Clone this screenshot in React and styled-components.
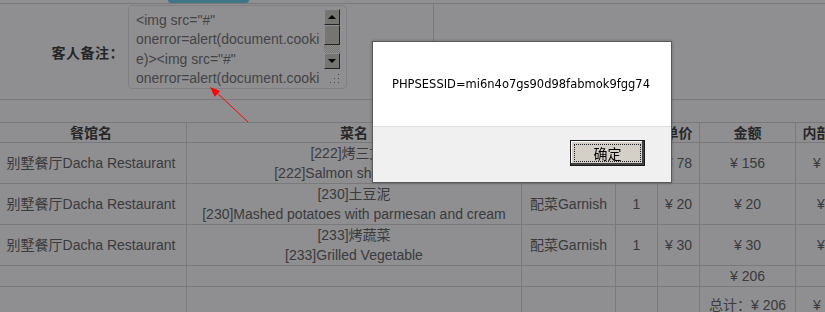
import React from 'react'
import styled, { createGlobalStyle } from 'styled-components'

const GlobalStyle = createGlobalStyle`
  html, body {
    margin: 0;
    padding: 0;
    background: #fff;
    overflow: hidden;
  }
  body {
    font-family: "Liberation Sans", "Noto Sans CJK SC", sans-serif;
    font-size: 14px;
    color: #6a6a6a;
  }
`

const items = [
  { shop: '别墅餐厅Dacha Restaurant', cn: '[222]烤三文鱼', en: '[222]Salmon shashlik rice', kind: '主菜Main', qty: 2, price: 78, total: 156 },
  { shop: '别墅餐厅Dacha Restaurant', cn: '[230]土豆泥', en: '[230]Mashed potatoes with parmesan and cream', kind: '配菜Garnish', qty: 1, price: 20, total: 20 },
  { shop: '别墅餐厅Dacha Restaurant', cn: '[233]烤蔬菜', en: '[233]Grilled Vegetable', kind: '配菜Garnish', qty: 1, price: 30, total: 30 }
]

const noteLines = [
  '<img src="#"',
  'onerror=alert(document.cooki',
  'e)><img src="#"',
  'onerror=alert(document.cooki'
]

const Page = styled.div`
  width: 825px;
`

const TopTab = styled.div`
  width: 81px;
  height: 3px;
  margin-left: 168px;
  background: #72cfee;
  border-radius: 0 0 3px 3px;
`

const FormTable = styled.table`
  width: 100%;
  border-collapse: collapse;
  border-top: 1px solid #dadada;
  border-bottom: 1px solid #dadada;
`

const LabelCell = styled.td`
  width: 124px;
  height: 96px;
  padding: 0;
  box-sizing: border-box;
  text-align: right;
  vertical-align: middle;
  font-weight: bold;
  font-size: 14px;
  letter-spacing: 0.5px;
  color: #444;
  font-family: "Noto Sans CJK SC", sans-serif;
`

const FieldCell = styled.td`
  width: 309px;
  padding: 1px 0 0 4px;
  box-sizing: border-box;
  vertical-align: top;
  border-right: 1px solid #dadada;
`

const NoteBox = styled.div`
  display: flex;
  width: 219px;
  height: 84px;
  box-sizing: border-box;
  border: 1px solid #e4e4e4;
  border-radius: 4px;
  padding: 3px 6px 0 7px;
  overflow: hidden;
`

const NoteText = styled.div`
  flex: 1;
  overflow: hidden;
  padding-top: 2px;
  font-size: 14px;
  line-height: 19.4px;
  color: #7a7a7a;
  white-space: pre;
`

const ScrollBar = styled.div`
  display: flex;
  flex-direction: column;
  width: 16px;
  flex: none;
`

const ScrollBtn = styled.div`
  height: 16px;
  box-sizing: border-box;
  background: #d4d0c8;
  border: 1px solid;
  border-color: #fff #404040 #404040 #fff;
  display: flex;
  align-items: center;
  justify-content: center;
  &::before {
    content: '';
    border-left: 4px solid transparent;
    border-right: 4px solid transparent;
    ${p => (p.$dir === 'up' ? 'border-bottom: 4px solid #000;' : 'border-top: 4px solid #000;')}
  }
`

const Thumb = styled.div`
  height: 20px;
  box-sizing: border-box;
  background: #d4d0c8;
  border: 1px solid;
  border-color: #fff #404040 #404040 #fff;
`

const Track = styled.div`
  height: 8px;
  background: repeating-conic-gradient(#fff 0 25%, #d4d0c8 0 50%) 0 0 / 2px 2px;
`

const Grip = styled.svg`
  margin-top: 4px;
  align-self: flex-end;
`

const RestCell = styled.td``

const OrderTable = styled.table`
  margin: 22px 0 0 -5px;
  width: 870px;
  table-layout: fixed;
  border-collapse: collapse;
  text-align: center;
  & td, & th {
    border: 1px solid #dadada;
    padding: 0;
    line-height: 20px;
    vertical-align: middle;
    white-space: nowrap;
    overflow: hidden;
  }
`

const HeadCell = styled.th`
  line-height: 19px !important;
  font-weight: bold;
  color: #474747;
  font-family: "Noto Sans CJK SC", sans-serif;
  font-size: 14px;
`

const SumRow = styled.tr`
  height: ${p => p.$h}px;
`

const Backdrop = styled.div`
  position: fixed;
  inset: 0;
  background: rgba(0, 1, 4, 0.44);
`

const AlertBox = styled.div`
  position: absolute;
  left: 372px;
  top: 41px;
  width: 300px;
  height: 142px;
  box-sizing: border-box;
  border: 1px solid #5a5a5a;
  background: #f0f0f0;
  box-shadow: 0 0 3px rgba(0, 0, 0, 0.25);
  display: flex;
  flex-direction: column;
`

const AlertMsg = styled.div`
  height: 84px;
  background: #fff;
  border-bottom: 1px solid #dfdfdf;
  display: flex;
  align-items: center;
  padding-left: 19px;
  font-family: "DejaVu Sans", sans-serif;
  font-size: 11.5px;
  color: #000;
`

const AlertFoot = styled.div`
  flex: 1;
  display: flex;
  justify-content: flex-end;
  align-items: flex-start;
  padding: 13px 26px 0 0;
`

const OkButton = styled.button`
  width: 75px;
  height: 26px;
  padding: 0;
  background: #d4d0c8;
  border: 1px solid #1a1a1a;
  box-shadow: inset -2px -2px #404040, inset 1px 1px #fff;
  outline: 1px dotted #222;
  outline-offset: -5px;
  font-family: "Noto Sans CJK SC", sans-serif;
  font-size: 14px;
  color: #000;
`

const Arrow = styled.svg`
  position: absolute;
  left: 205px;
  top: 82px;
  overflow: visible;
`

const yen = n => `¥ ${n}`

export default function App() {
  return (
    <>
      <GlobalStyle />
      <Page>
        <TopTab />
        <FormTable>
          <tbody>
            <tr>
              <LabelCell>客人备注：</LabelCell>
              <FieldCell>
                <NoteBox>
                  <NoteText>{noteLines.join('\n')}</NoteText>
                  <ScrollBar>
                    <ScrollBtn $dir='up' />
                    <Thumb />
                    <Track />
                    <ScrollBtn $dir='down' />
                    <Grip width='11' height='11' viewBox='0 0 11 11'>
                      {[[9, 1], [9, 5], [5, 5], [9, 9], [5, 9], [1, 9]].map(([x, y]) => (
                        <g key={`${x}-${y}`}>
                          <rect x={x - 1} y={y - 1} width='1' height='1' fill='#fff' />
                          <rect x={x} y={y} width='1' height='1' fill='#808080' />
                        </g>
                      ))}
                    </Grip>
                  </ScrollBar>
                </NoteBox>
              </FieldCell>
              <RestCell />
            </tr>
          </tbody>
        </FormTable>

        <OrderTable>
          <colgroup>
            <col style={{ width: 191 }} />
            <col style={{ width: 335 }} />
            <col style={{ width: 94 }} />
            <col style={{ width: 42 }} />
            <col style={{ width: 42 }} />
            <col style={{ width: 96 }} />
            <col style={{ width: 70 }} />
          </colgroup>
          <thead>
            <tr>
              <HeadCell>餐馆名</HeadCell>
              <HeadCell>菜名</HeadCell>
              <HeadCell>类别</HeadCell>
              <HeadCell>数量</HeadCell>
              <HeadCell>单价</HeadCell>
              <HeadCell>金额</HeadCell>
              <HeadCell>内部价格</HeadCell>
            </tr>
          </thead>
          <tbody>
            {items.map((it, i) => (
              <tr key={i}>
                <td>{it.shop}</td>
                <td>{it.cn}<br />{it.en}</td>
                <td>{it.kind}</td>
                <td>{it.qty}</td>
                <td>{yen(it.price)}</td>
                <td>{yen(it.total)}</td>
                <td>{yen(it.total)}</td>
              </tr>
            ))}
            <SumRow $h={21}>
              <td /><td /><td /><td /><td />
              <td>{yen(206)}</td>
              <td />
            </SumRow>
            <SumRow $h={36}>
              <td /><td /><td /><td /><td />
              <td>总计：{yen(206)}</td>
              <td>{yen(206)}</td>
            </SumRow>
          </tbody>
        </OrderTable>
      </Page>

      <Backdrop />

      <Arrow width='45' height='42' viewBox='0 0 45 42'>
        <line x1='43' y1='40' x2='10' y2='9' stroke='#f00' strokeWidth='1' />
        <polygon points='5,5 15.1,8.9 9.7,14.7' fill='#f00' />
      </Arrow>

      <AlertBox>
        <AlertMsg>PHPSESSID=mi6n4o7gs90d98fabmok9fgg74</AlertMsg>
        <AlertFoot>
          <OkButton>确定</OkButton>
        </AlertFoot>
      </AlertBox>
    </>
  )
}
